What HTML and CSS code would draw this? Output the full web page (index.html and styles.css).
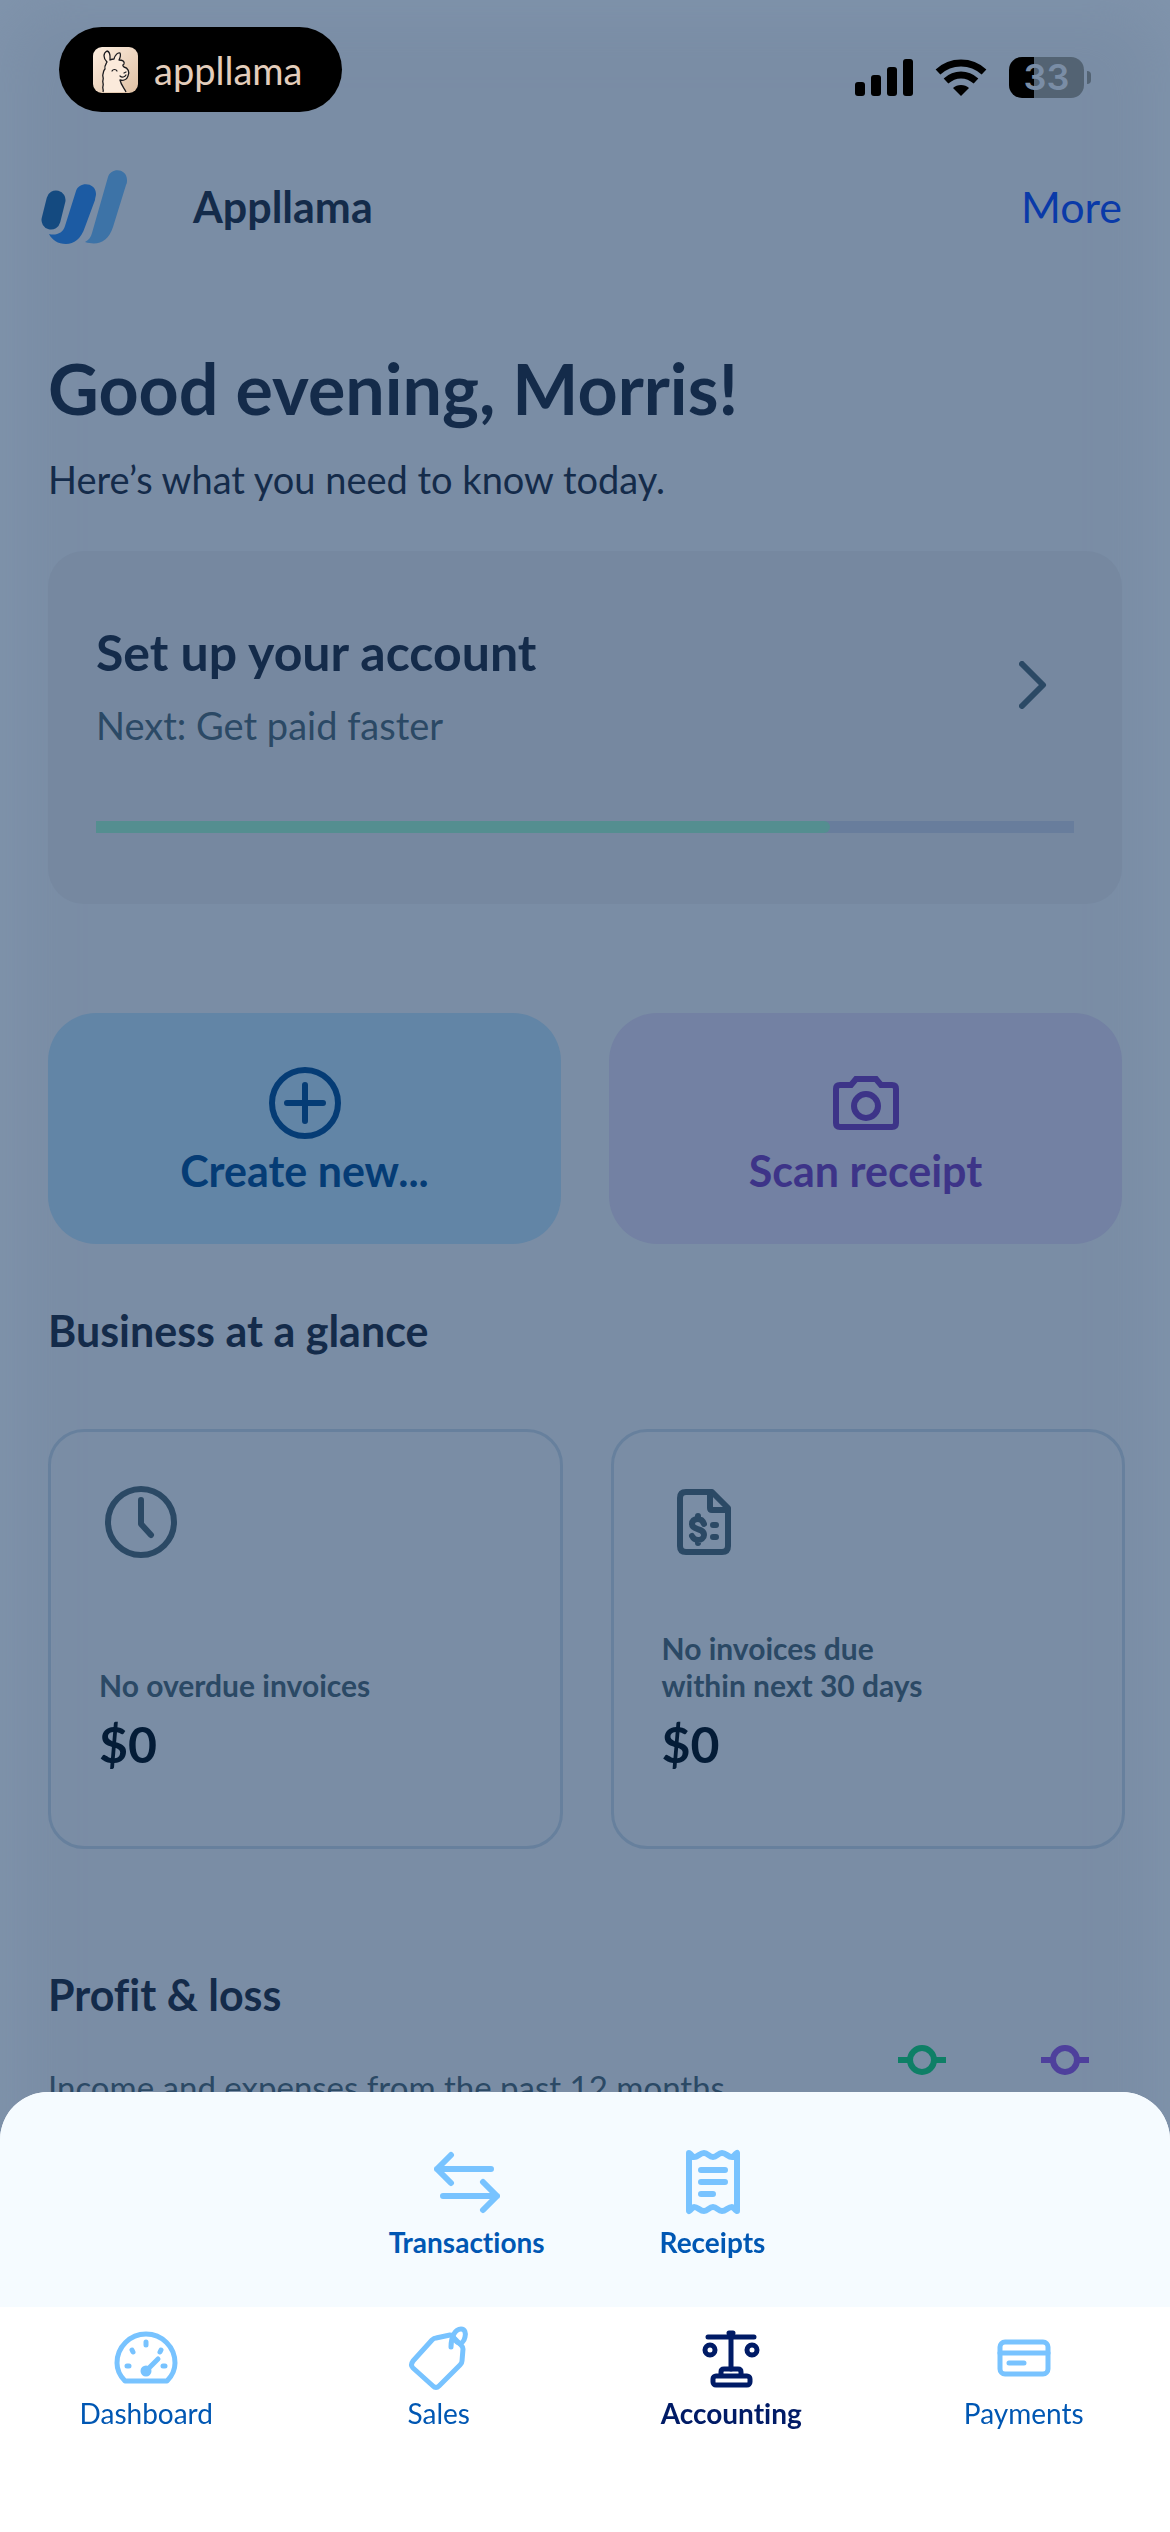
FILE: index.html
```html
<!DOCTYPE html>
<html lang="en">
<head>
    <meta charset="UTF-8">
    <meta name="viewport" content="width=device-width, initial-scale=1.0">
    <title>Dashboard</title>
    <link rel="stylesheet" href="styles.css">
</head>
<body>

<div class="status-bar">
    <div class="app-pill">
        <svg class="llama" viewBox="0 0 45 46" aria-hidden="true">
            <defs>
                <linearGradient id="sand" x1="0" y1="0" x2="1" y2="1">
                    <stop offset="0" stop-color="#fdeee0"/>
                    <stop offset="1" stop-color="#dfc0a3"/>
                </linearGradient>
            </defs>
            <rect width="45" height="46" rx="9" fill="url(#sand)"/>
            <path d="M10 45c1-3-1-3 0-6s-1-3 0-6-1-3 0-6 0-3 2-5c-1-3 1-5 2-7-4-4-4-9 0-11 4 1 3 6 3 9 2-1 3-1 4-1 1-4 4-7 6-6 1 2 0 5-1 7 3 0 6 1 5 4-2 1-1 2 0 3 4 1 6 5 4 9-1 3-4 5-8 4 1 5 4 8 6 12" fill="#fbeadb" stroke="#1b1b1f" stroke-width="1.3" stroke-linejoin="round"/>
            <path d="M19 24c1-2 4-2 5 0M33 25l-2 1M27 29c2 2 5 1 6-1" fill="none" stroke="#1b1b1f" stroke-width="1.2" stroke-linecap="round"/>
        </svg>
        <span class="wordmark">appllama</span>
    </div>
    <div class="device-icons">
        <svg class="signal" viewBox="0 0 58 37" aria-hidden="true">
            <rect x="0" y="23" width="10" height="14" rx="3"/>
            <rect x="16" y="16" width="10" height="21" rx="3"/>
            <rect x="32" y="8" width="10" height="29" rx="3"/>
            <rect x="48" y="0" width="10" height="37" rx="3"/>
        </svg>
        <svg class="wifi" viewBox="0 0 52 37" aria-hidden="true">
            <path d="M3 13C16 1 36 1 49 13" fill="none" stroke="#000" stroke-width="7"/>
            <path d="M11 22C20 14 32 14 41 22" fill="none" stroke="#000" stroke-width="7"/>
            <path d="M26 37l-8-8c4-4 12-4 16 0z"/>
        </svg>
        <div class="battery">33</div>
    </div>
</div>

<header class="top-bar">
    <svg class="logo" viewBox="0 0 86 76" aria-hidden="true">
        <path d="M15 31L10 51" stroke="#144a80" stroke-width="19" stroke-linecap="round"/>
        <path d="M35 22c3-10 20-9 20 3 0 2-1 4-1 6L44 58C40 70 33 75 25 75 17 75 11 71 8 65c7 2 14-1 16-8z" fill="#1c5ba3"/>
        <path d="M67 8c3-10 19-9 19 3 0 2 0 3-1 5L72 58C67 73 57 77 44 73c4-2 6-5 7-9z" fill="#3d73a7"/>
    </svg>
    <span class="business">Appllama</span>
    <a href="#" class="more">More</a>
</header>

<main>
    <h1>Good evening, Morris!</h1>
    <p class="intro">Here’s what you need to know today.</p>

    <a href="#" class="setup">
        <span class="setup-row">
            <span class="setup-text">
                <strong>Set up your account</strong>
                <span>Next: Get paid faster</span>
            </span>
            <svg class="chevron" viewBox="0 0 28 48" aria-hidden="true">
                <path d="M3 3l21 21L3 45"/>
            </svg>
        </span>
        <span class="progress"><span class="progress-fill" style="width: 75%"></span></span>
    </a>

    <div class="actions">
        <button type="button" class="create">
            <svg viewBox="0 0 72 72" aria-hidden="true">
                <circle cx="36" cy="36" r="33"/>
                <path d="M36 18v36M18 36h36"/>
            </svg>
            Create new...
        </button>
        <button type="button" class="scan">
            <svg viewBox="0 0 72 72" aria-hidden="true">
                <path d="M10 18h11l5-6h20l5 6h11q4 0 4 4v34q0 4-4 4H10q-4 0-4-4V22q0-4 4-4z"/>
                <circle cx="36" cy="39" r="12"/>
            </svg>
            Scan receipt
        </button>
    </div>

    <h2>Business at a glance</h2>
    <div class="glance">
        <section>
            <svg viewBox="0 0 84 84" aria-hidden="true">
                <circle cx="42" cy="42" r="33"/>
                <path d="M42 20v24l10 11"/>
            </svg>
            <p>No overdue invoices</p>
            <strong>$0</strong>
        </section>
        <section>
            <svg viewBox="0 0 84 84" aria-hidden="true">
                <path d="M50 12H24q-6 0-6 6v48q0 6 6 6h36q6 0 6-6V28zM48 12v16q0 2 2 2h16"/>
                <path d="M36 36v3M36 60v3M42 44c-1-3-3-5-6-5-4 0-6 2-6 5 0 7 12 3 12 11 0 3-3 5-6 5-4 0-5-2-6-4M51 45h3M51 57h3"/>
            </svg>
            <p>No invoices due<br>within next 30 days</p>
            <strong>$0</strong>
        </section>
    </div>

    <h2 class="profit">Profit &amp; loss</h2>
    <div class="profit-row">
        <p>Income and expenses from the past 12 months</p>
        <svg class="legend income" viewBox="0 0 48 30" aria-hidden="true">
            <path d="M0 15h12M36 15h12"/>
            <circle cx="24" cy="15" r="12"/>
        </svg>
        <svg class="legend expenses" viewBox="0 0 48 30" aria-hidden="true">
            <path d="M0 15h12M36 15h12"/>
            <circle cx="24" cy="15" r="12"/>
        </svg>
    </div>
</main>

<div class="sheet">
    <div class="sub-menu">
        <a href="#">
            <svg viewBox="0 0 66 66" aria-hidden="true">
                <path d="M57 20H3M17 6L3 20l14 14M9 47h54M49 33l14 14-14 14"/>
            </svg>
            Transactions
        </a>
        <a href="#">
            <svg viewBox="0 0 66 66" aria-hidden="true">
                <path d="M10 4c3 2 3 4 5 4 4 0 6-4 10-4s5 4 9 4 5-4 9-4 6 4 10 4c2 0 2-2 5-4v58c-3-2-3-4-5-4-4 0-6 4-10 4s-5-4-9-4-5 4-9 4-6-4-10-4c-2 0-2 2-5 4z"/>
                <path d="M22 21h24M22 33h24M22 45h12"/>
            </svg>
            Receipts
        </a>
    </div>
    <nav class="tabs">
        <a href="#">
            <svg viewBox="0 0 66 66" aria-hidden="true">
                <path d="M12 56C7 51 4 44 4 38a29 29 0 0 1 58 0c0 6-3 13-8 18z"/>
                <path d="M33 17v3M19 25l1 2M48 25l-1 2M14 41h2M50 41h2M33 46l12-12"/>
                <circle cx="33" cy="46" r="3"/>
            </svg>
            Dashboard
        </a>
        <a href="#">
            <svg viewBox="0 0 66 66" aria-hidden="true">
                <path d="M30 13l14-3q2 0 3 2l8 8q2 2 2 4l-1 12q0 2-2 4L33 61q-3 3-6 0L7 43q-3-3 0-7l19-21q2-2 4-2z"/>
                <path d="M45 22C45 12 49 4 55 4c4 0 5 4 4 8-1 5-4 7-6 6-2 0-4-3-5-5"/>
            </svg>
            Sales
        </a>
        <a href="#" class="active">
            <svg viewBox="0 0 66 66" aria-hidden="true">
                <path d="M10 12h46M31 8h4M33 8v36"/>
                <circle cx="12" cy="25" r="5"/>
                <circle cx="54" cy="25" r="5"/>
                <path d="M23 50v-3q0-3 3-3h14q3 0 3 3v3"/>
                <rect x="15" y="51" width="37" height="9" rx="3"/>
            </svg>
            Accounting
        </a>
        <a href="#">
            <svg viewBox="0 0 66 66" aria-hidden="true">
                <rect x="9" y="17" width="48" height="32" rx="5"/>
                <path d="M9 28h48M18 38h15"/>
            </svg>
            Payments
        </a>
    </nav>
</div>

</body>
</html>
```

FILE: styles.css
```css
* {
    box-sizing: border-box;
}
body {
    margin: 0;
    min-height: 100vh;
    background-color: #7a8da5;
    box-shadow: inset 0 0 80px #8296ae;
    font-family: Lato, sans-serif;
    font-variant-ligatures: none;
    color: #142b4a;
}
h1, h2, p {
    margin: 0;
}
a {
    text-decoration: none;
    color: inherit;
}
svg {
    display: block;
    flex: none;
}

/* phone status bar */
.status-bar {
    display: flex;
    justify-content: space-between;
    align-items: flex-end;
    padding: 27px 86px 0 59px;
}
.app-pill {
    display: flex;
    align-items: center;
    gap: 16px;
    height: 85px;
    padding: 0 40px 0 34px;
    border-radius: 43px;
    background-color: #000;
}
.llama {
    width: 45px;
    height: 46px;
}
.wordmark {
    font-size: 38px;
    line-height: 44px;
    color: #e3cdbb;
}
.device-icons {
    display: flex;
    align-items: center;
    gap: 22px;
    padding-bottom: 14px;
}
.signal {
    width: 58px;
    height: 37px;
}
.wifi {
    width: 52px;
    height: 37px;
}
.battery {
    position: relative;
    width: 75px;
    height: 41px;
    border-radius: 13px;
    background: linear-gradient(to right, #000 33%, #536373 33%);
    font-family: Inter, sans-serif;
    font-size: 36px;
    font-weight: 600;
    line-height: 41px;
    text-align: center;
    color: #7a8da5;
}
.battery::after {
    content: "";
    position: absolute;
    right: -7px;
    top: 14px;
    width: 4px;
    height: 13px;
    border-radius: 0 4px 4px 0;
    background-color: #536373;
}

/* page header */
.top-bar {
    display: flex;
    align-items: center;
    padding: 57px 48px 0 41px;
    font-size: 43px;
    line-height: 50px;
}
.logo {
    width: 86px;
    height: 76px;
}
.business {
    margin-left: 66px;
    font-weight: bold;
}
.more {
    margin-left: auto;
    color: #0a3aa8;
}

main {
    padding: 0 48px;
}
h1 {
    margin-top: 103px;
    font-size: 70px;
    line-height: 80px;
}
h2 {
    margin-top: 62px;
    font-size: 43px;
    line-height: 50px;
}
.intro {
    margin-top: 29px;
    font-size: 38px;
    line-height: 44px;
}

/* account setup card */
.setup {
    display: block;
    margin-top: 50px;
    padding: 71px 48px;
    border-radius: 36px;
    background-color: #7688a0;
}
.setup-row {
    display: flex;
    justify-content: space-between;
    align-items: center;
    padding-right: 27px;
}
.setup-text {
    display: flex;
    flex-direction: column;
    gap: 21px;
    font-size: 38px;
    line-height: 44px;
    color: #2b4965;
}
.setup-text strong {
    font-size: 50px;
    line-height: 60px;
    color: #142b4a;
}
.chevron {
    width: 28px;
    height: 48px;
    fill: none;
    stroke: #2b4965;
    stroke-width: 6;
    stroke-linecap: round;
    stroke-linejoin: round;
}
.progress {
    display: block;
    height: 12px;
    margin-top: 74px;
    background-color: #687d9c;
}
.progress-fill {
    display: block;
    height: 12px;
    border-radius: 0 6px 6px 0;
    background-color: #548e90;
}

.actions {
    display: grid;
    grid-template-columns: 1fr 1fr;
    gap: 48px;
    margin-top: 109px;
}
.actions button {
    display: flex;
    flex-direction: column;
    align-items: center;
    gap: 7px;
    padding: 54px 0 48px;
    border: none;
    border-radius: 48px;
    font-family: inherit;
    font-size: 43px;
    font-weight: bold;
    line-height: 50px;
}
.actions svg {
    width: 72px;
    height: 72px;
    fill: none;
    stroke: currentColor;
    stroke-width: 6;
    stroke-linecap: round;
}
.create {
    background-color: #6285a6;
    color: #053c75;
}
.scan {
    background-color: #7381a3;
    color: #3d3488;
}

.glance {
    display: grid;
    grid-template-columns: 1fr 1fr;
    gap: 48px;
    margin: 73px -3px 0 0;
}
.glance section {
    display: flex;
    flex-direction: column;
    min-height: 420px;
    padding: 48px 48px 72px;
    border: 3px solid #67809d;
    border-radius: 36px;
}
.glance svg {
    width: 84px;
    height: 84px;
    fill: none;
    stroke: #2b4965;
    stroke-width: 6;
    stroke-linecap: round;
    stroke-linejoin: round;
}
.glance p {
    margin-top: auto;
    font-size: 30px;
    font-weight: bold;
    line-height: 37px;
    color: #2b4965;
}
.glance strong {
    margin-top: 10px;
    font-size: 50px;
    line-height: 60px;
    color: #041c37;
}

.profit {
    margin-top: 121px;
}
.profit-row {
    display: flex;
    gap: 95px;
    margin-top: 25px;
    padding-right: 33px;
}
.profit-row p {
    flex: 1;
    padding-top: 20px;
    font-size: 33px;
    line-height: 44px;
    white-space: nowrap;
    color: #2b4965;
}
.legend {
    width: 48px;
    height: 30px;
    fill: none;
    stroke-width: 6;
}
.income {
    stroke: #0e7f66;
}
.expenses {
    stroke: #4e409c;
}

/* bottom sheet with the tab bar */
.sheet {
    position: fixed;
    left: 0;
    right: 0;
    bottom: 0;
    overflow: hidden;
    border-radius: 48px 48px 0 0;
    background-color: #fff;
    font-size: 28px;
    line-height: 32px;
    color: #0057b3;
}
.sheet a {
    display: flex;
    flex-direction: column;
    align-items: center;
}
.sheet svg {
    width: 66px;
    height: 66px;
    fill: none;
    stroke: #78c3ff;
    stroke-width: 6;
    stroke-linecap: round;
    stroke-linejoin: round;
}
.sub-menu {
    display: flex;
    justify-content: center;
    gap: 115px;
    padding: 57px 16px 49px 0;
    background-color: #f5fbff;
    font-weight: bold;
}
.sub-menu a {
    gap: 11px;
}
.tabs {
    display: grid;
    grid-template-columns: repeat(4, 1fr);
    padding: 18px 0 103px;
}
.tabs a {
    gap: 6px;
}
.tabs svg {
    stroke-width: 5;
}
.tabs .active {
    font-weight: bold;
    color: #001b66;
}
.active svg {
    stroke: #001b66;
}
```
